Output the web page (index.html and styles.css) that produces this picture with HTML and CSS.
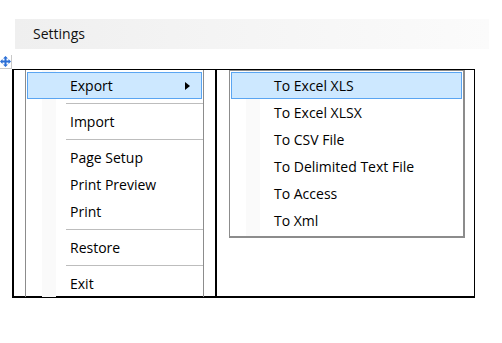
FILE: index.html
```html
<!DOCTYPE html>
<html lang="en">

<head>
  <meta charset="UTF-8">
  <meta name="viewport" content="width=device-width, initial-scale=1.0">
  <title>Settings Menu</title>
  <link rel="stylesheet" href="styles.css">
</head>

<body>

  <!-- Title bar -->
  <div class="titlebar">Settings</div>

  <!-- Table move handle -->
  <div class="move-handle">
    <svg width="11" height="11" viewBox="0 0 11 11">
      <path d="M5.5 0 L8 2.5 H6.5 V4.5 H8.5 V3 L11 5.5 L8.5 8 V6.5 H6.5 V8.5 H8 L5.5 11 L3 8.5 H4.5 V6.5 H2.5 V8 L0 5.5 L2.5 3 V4.5 H4.5 V2.5 H3 Z" fill="#2b6fd6"/>
    </svg>
  </div>

  <!-- Two-cell frame holding the menus -->
  <div class="frame">
    <div class="cell cell-left">
      <div class="menu">
        <div class="item active">Export <span class="arrow"></span></div>
        <div class="sep"></div>
        <div class="item">Import</div>
        <div class="sep"></div>
        <div class="item">Page Setup</div>
        <div class="item">Print Preview</div>
        <div class="item">Print</div>
        <div class="sep"></div>
        <div class="item">Restore</div>
        <div class="sep"></div>
        <div class="item">Exit</div>
      </div>
    </div>

    <div class="cell cell-right">
      <div class="submenu">
        <div class="item active">To Excel XLS</div>
        <div class="item">To Excel XLSX</div>
        <div class="item">To CSV File</div>
        <div class="item">To Delimited Text File</div>
        <div class="item">To Access</div>
        <div class="item">To Xml</div>
      </div>
    </div>
  </div>

</body>

</html>
```

FILE: styles.css
```css
/* Reset styles */
* {
  margin: 0;
  padding: 0;
  box-sizing: border-box;
}

body {
  background: #fff;
  font-family: 'Open Sans', 'Noto Sans', sans-serif;
  font-size: 14px;
  color: #000;
}

/* Title bar */
.titlebar {
  margin: 19px 0 0 15px;
  width: 474px;
  height: 30px;
  padding-left: 18px;
  line-height: 29px;
  font-size: 14px;
  color: #111;
  background: linear-gradient(to right, #efefef, #f5f5f5 50%, #fbfbfb);
}

/* Move handle */
.move-handle {
  margin-top: 6px;
  width: 12px;
  height: 14px;
  padding: 1px 0 0 0;
  border-right: 1px solid #c8c8c8;
  border-bottom: 1px solid #c8c8c8;
}

.move-handle svg {
  display: block;
}

/* Frame */
.frame {
  margin-left: 12px;
  width: 463px;
  height: 229px;
  display: grid;
  grid-template-columns: 203px 1fr;
  border-top: 1px solid #000;
  border-left: 2px solid #000;
  border-right: 1px solid #000;
  border-bottom: 2px solid #000;
}

.cell-left {
  border-right: 2px solid #000;
  padding-left: 11px;
}

.cell-right {
  padding-left: 12px;
}

/* Menus */
.menu,
.submenu {
  background:
    linear-gradient(to right, transparent 16px, #fafafa 16px, #fafafa 30px, transparent 30px);
}

.menu {
  width: 179px;
  height: 100%;
  padding-top: 2px;
  border-left: 1px solid #8c8c8c;
  border-right: 1px solid #8c8c8c;
}

.submenu {
  width: 236px;
  padding: 1px 0 2px 0;
  border: 1px solid #8c8c8c;
  border-right-width: 2px;
  border-bottom-width: 2px;
}

.item {
  position: relative;
  height: 27px;
  line-height: 25px;
  padding-left: 42px;
  border: 1px solid transparent;
  margin: 0 1px;
  white-space: nowrap;
}

.item.active {
  background-color: #cde8ff;
  border-color: #5aa5f2;
}

.arrow {
  position: absolute;
  right: 11px;
  top: 9px;
  border-left: 5px solid #000;
  border-top: 4px solid transparent;
  border-bottom: 4px solid transparent;
}

.sep {
  height: 1px;
  margin: 4px 0 4px 40px;
  background: #bdbdbd;
  box-sizing: content-box;
}
```
